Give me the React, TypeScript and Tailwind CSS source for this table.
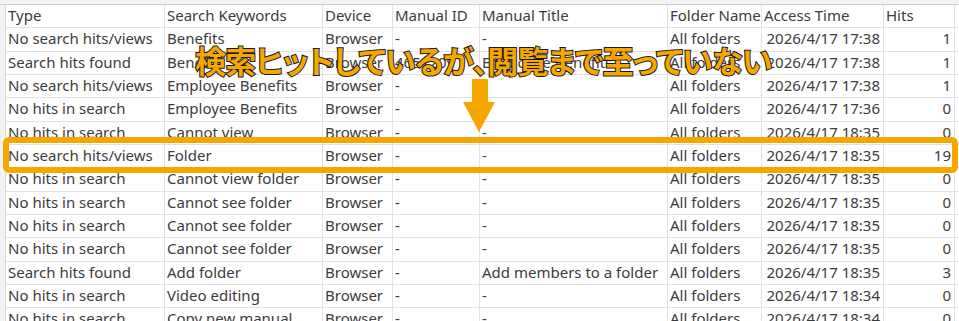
import React from "react";

type Row = {
  type: string;
  keyword: string;
  device: string;
  manualId: string;
  title: string;
  folder: string;
  time: string;
  hits: number;
};

const rows: Row[] = [
  { type: "No search hits/views", keyword: "Benefits", device: "Browser", manualId: "-", title: "-", folder: "All folders", time: "2026/4/17 17:38", hits: 1 },
  { type: "Search hits found", keyword: "Benefits", device: "Browser", manualId: "4651209", title: "Employee Benefits", folder: "All folders", time: "2026/4/17 17:38", hits: 1 },
  { type: "No search hits/views", keyword: "Employee Benefits", device: "Browser", manualId: "-", title: "-", folder: "All folders", time: "2026/4/17 17:38", hits: 1 },
  { type: "No hits in search", keyword: "Employee Benefits", device: "Browser", manualId: "-", title: "-", folder: "All folders", time: "2026/4/17 17:36", hits: 0 },
  { type: "No hits in search", keyword: "Cannot view", device: "Browser", manualId: "-", title: "-", folder: "All folders", time: "2026/4/17 18:35", hits: 0 },
  { type: "No search hits/views", keyword: "Folder", device: "Browser", manualId: "-", title: "-", folder: "All folders", time: "2026/4/17 18:35", hits: 19 },
  { type: "No hits in search", keyword: "Cannot view folder", device: "Browser", manualId: "-", title: "-", folder: "All folders", time: "2026/4/17 18:35", hits: 0 },
  { type: "No hits in search", keyword: "Cannot see folder", device: "Browser", manualId: "-", title: "-", folder: "All folders", time: "2026/4/17 18:35", hits: 0 },
  { type: "No hits in search", keyword: "Cannot see folder", device: "Browser", manualId: "-", title: "-", folder: "All folders", time: "2026/4/17 18:35", hits: 0 },
  { type: "No hits in search", keyword: "Cannot see folder", device: "Browser", manualId: "-", title: "-", folder: "All folders", time: "2026/4/17 18:35", hits: 0 },
  { type: "Search hits found", keyword: "Add folder", device: "Browser", manualId: "-", title: "Add members to a folder", folder: "All folders", time: "2026/4/17 18:35", hits: 3 },
  { type: "No hits in search", keyword: "Video editing", device: "Browser", manualId: "-", title: "-", folder: "All folders", time: "2026/4/17 18:34", hits: 0 },
  { type: "No hits in search", keyword: "Copy new manual", device: "Browser", manualId: "-", title: "-", folder: "All folders", time: "2026/4/17 18:34", hits: 0 },
];

const gridCols =
  "grid grid-cols-[159px_158px_70px_87px_188px_94px_122px_71px_1fr]";
const cell =
  "h-[23.33px] border-r border-b border-[#e2e2e2] px-[2px] pb-[2px] flex items-center whitespace-nowrap overflow-hidden";

function Cell({ children, right }: { children?: React.ReactNode; right?: boolean }) {
  return (
    <div className={`${cell} ${right ? "justify-end pr-[3px]" : ""}`}>
      {children}
    </div>
  );
}

export default function App() {
  return (
    <div className="relative w-[959px] h-[321px] overflow-hidden bg-white font-['Noto_Sans','Noto_Sans_CJK_JP',sans-serif] text-[15px] text-[#3c3c3c]">
      <div className="h-[5px] bg-[#f3f3f3] border-b border-[#cfcfcf]" />
      <div className="flex">
        <div className="w-[6px] shrink-0 bg-[#f3f3f3] border-r border-[#d6d6d6]" />
        <div className="flex-1">
          <div className={gridCols}>
            <Cell>Type</Cell>
            <Cell>Search Keywords</Cell>
            <Cell>Device</Cell>
            <Cell>Manual ID</Cell>
            <Cell>Manual Title</Cell>
            <Cell>Folder Name</Cell>
            <Cell>Access Time</Cell>
            <Cell>Hits</Cell>
            <Cell />
          </div>
          {rows.map((r, i) => (
            <div key={i} className={gridCols}>
              <Cell>{r.type}</Cell>
              <Cell>{r.keyword}</Cell>
              <Cell>{r.device}</Cell>
              <Cell>{r.manualId}</Cell>
              <Cell>{r.title}</Cell>
              <Cell>{r.folder}</Cell>
              <Cell right>{r.time}</Cell>
              <Cell right>{r.hits}</Cell>
              <Cell />
            </div>
          ))}
        </div>
      </div>

      {/* annotation */}
      <div className="absolute left-[195px] top-[40px] whitespace-nowrap font-['Noto_Sans_CJK_JP',sans-serif] font-bold text-[31px] leading-[40px] tracking-[-0.7px] text-[#f5a700] [font-feature-settings:'palt'] [-webkit-text-stroke:2px_#1a1a1a] [paint-order:stroke_fill]">
        検索ヒットしているが、閲覧まで至っていない
      </div>
      <svg className="absolute left-[462px] top-[78px]" width="34" height="55" viewBox="0 0 34 55">
        <path d="M10 1 H26 V24 H33 L17 54 L1 24 H10 Z" fill="#f5a700" />
      </svg>
      <div className="absolute left-[3px] top-[137px] w-[955px] h-[36px] border-[6.5px] border-[#f5a700] rounded-[6px]" />
    </div>
  );
}
